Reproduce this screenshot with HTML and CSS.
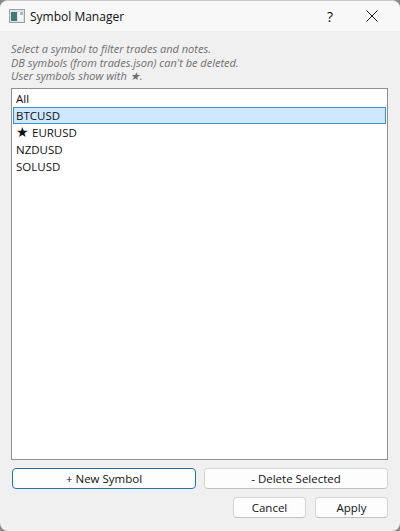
FILE: index.html
```html
<!DOCTYPE html>
<html lang="en">
<head>
<meta charset="utf-8">
<title>Symbol Manager</title>
<link rel="stylesheet" href="styles.css">
</head>
<body>
<div class="window">
  <header class="titlebar">
    <svg class="app-icon" width="16" height="14" viewBox="0 0 16 14">
      <rect x="0.5" y="0.5" width="15" height="13" fill="#dfe3e6" stroke="#9aa3a8"/>
      <rect x="2" y="3" width="6" height="9" fill="#3f7a78"/>
      <rect x="9" y="3" width="5" height="9" fill="#f2f4f5"/>
      <rect x="11" y="3" width="3" height="3" fill="#aeb8be"/>
    </svg>
    <span class="title">Symbol Manager</span>
    <span class="help">?</span>
    <svg class="close" width="12" height="12" viewBox="0 0 12 12">
      <path d="M0.5 0.5L11.5 11.5M11.5 0.5L0.5 11.5" stroke="#1a1a1a" stroke-width="1" fill="none"/>
    </svg>
  </header>
  <main class="content">
    <p class="hint">Select a symbol to filter trades and notes.<br>DB symbols (from trades.json) can't be deleted.<br>User symbols show with ★.</p>
    <ul class="list">
      <li class="item">All</li>
      <li class="item selected">BTCUSD</li>
      <li class="item"><span class="star">★</span>EURUSD</li>
      <li class="item">NZDUSD</li>
      <li class="item">SOLUSD</li>
    </ul>
    <div class="row-main">
      <button class="btn primary">+ New Symbol</button>
      <button class="btn">- Delete Selected</button>
    </div>
    <div class="row-footer">
      <button class="btn small">Cancel</button>
      <button class="btn small">Apply</button>
    </div>
  </main>
</div>
</body>
</html>
```
FILE: styles.css
```css
html, body { margin: 0; padding: 0; height: 100%; background: #8a8a8a; }
body { font-family: "Open Sans", "Noto Sans", sans-serif; font-size: 11.5px; color: #111; overflow: hidden; }
.window { width: 400px; height: 531px; display: flex; flex-direction: column; background: #f0f0f0; border-radius: 8px 8px 8px 8px; overflow: hidden; box-sizing: border-box; border: 1px solid #c9c9c9; border-width: 1px 0 0 0; }
.titlebar { height: 30px; flex: none; display: flex; align-items: center; background: #f8f8f8; padding: 0 22px 0 9px; }
.app-icon { flex: none; }
.title { margin-left: 5px; font-size: 12px; flex: 1; }
.help { font-size: 14px; margin-right: 33px; font-weight: 400; }
.close { flex: none; }
.content { flex: 1; display: flex; flex-direction: column; padding: 11px 12px 13px 11px; min-height: 0; }
.hint { margin: 0 0 5px; font-style: italic; font-size: 11px; line-height: 13.5px; color: #6e6e6e; }
.list { list-style: none; margin: 0; padding: 1px 1px 1px 1px; background: #fff; border: 1px solid #8f8f8f; flex: 1; min-height: 0; }
.item { height: 17px; line-height: 17px; padding-left: 3px; font-size: 11.5px; box-sizing: border-box; }
.selected { background: #cde8ff; border: 1px solid #3d8fc6; line-height: 15px; padding-left: 2px; }
.star { font-size: 14px; margin-right: 3px; line-height: 15px; }
.row-main { display: flex; gap: 8px; margin-top: 8px; padding-left: 1px; }
.row-main .btn { flex: 1; }
.row-footer { display: flex; justify-content: flex-end; gap: 9px; margin-top: 8px; }
.btn { height: 21px; padding: 0; border: 1px solid #d6d6d6; border-bottom-color: #c2c2c2; border-radius: 4px; background: #fdfdfd; font: inherit; font-size: 11.5px; color: #111; }
.primary { border-color: #1c74a8; }
.small { width: 73px; }
```
